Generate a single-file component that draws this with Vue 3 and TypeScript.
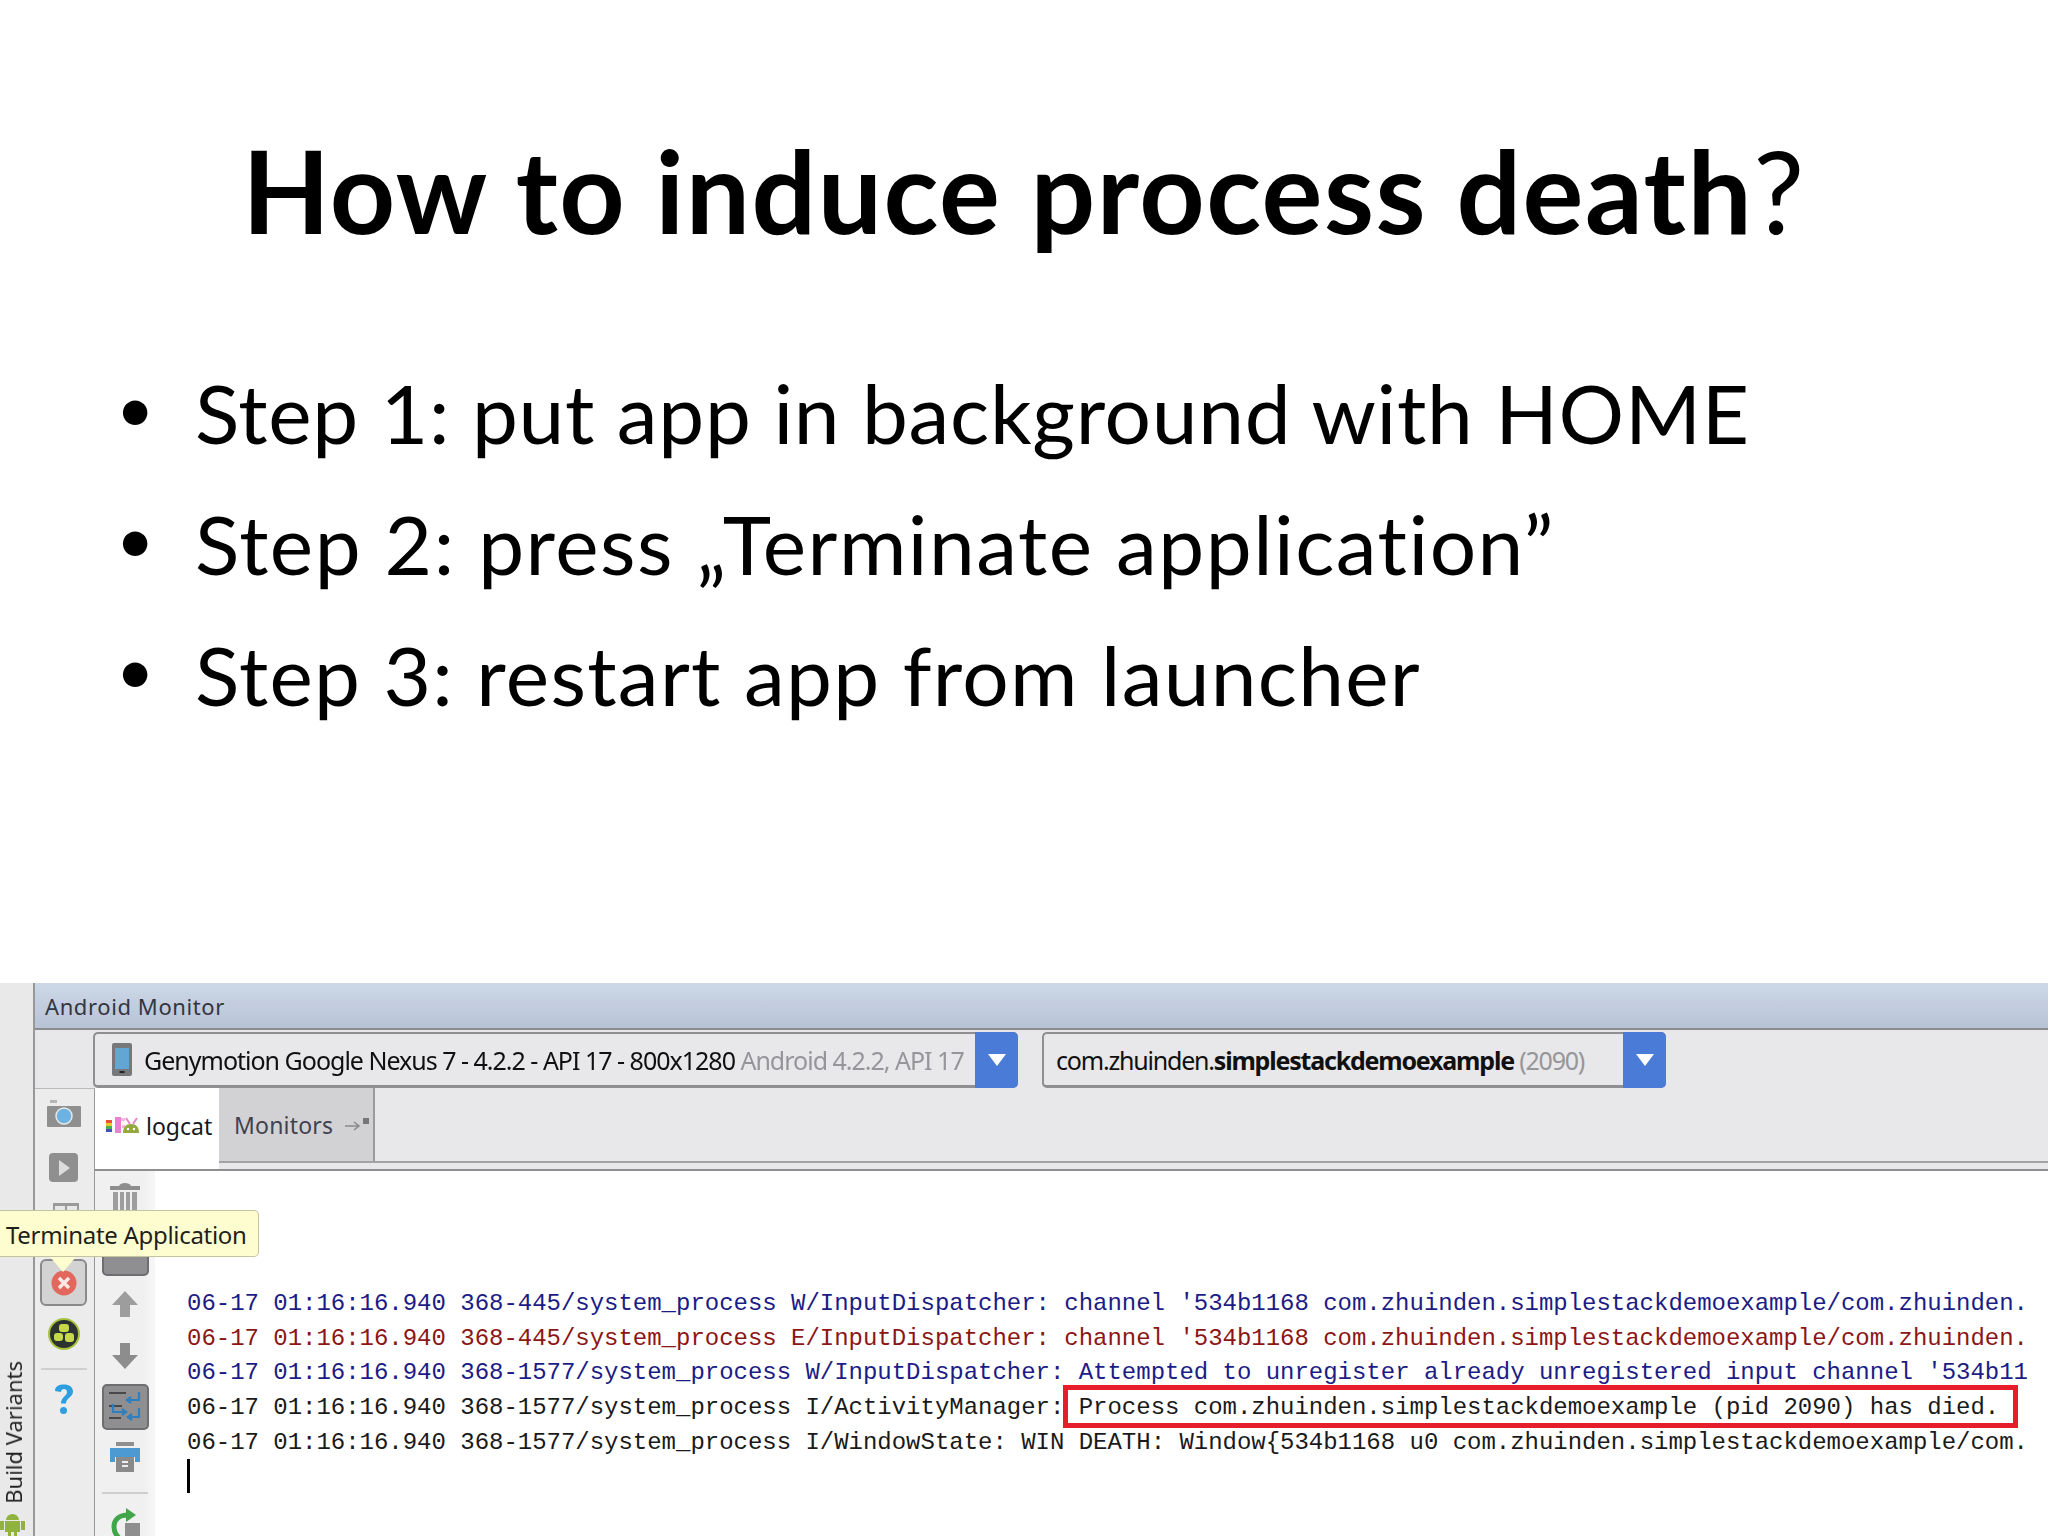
<script setup lang="ts">
interface LogLine { level: 'w' | 'e' | 'i'; prefix: string; text: string; marked?: boolean }
const stamp = '06-17 01:16:16.940 '
const lines: LogLine[] = [
  { level: 'w', prefix: '368-445/system_process W/InputDispatcher: ', text: "channel '534b1168 com.zhuinden.simplestackdemoexample/com.zhuinden." },
  { level: 'e', prefix: '368-445/system_process E/InputDispatcher: ', text: "channel '534b1168 com.zhuinden.simplestackdemoexample/com.zhuinden." },
  { level: 'w', prefix: '368-1577/system_process W/InputDispatcher: ', text: "Attempted to unregister already unregistered input channel '534b11" },
  { level: 'i', prefix: '368-1577/system_process I/ActivityManager: ', text: 'Process com.zhuinden.simplestackdemoexample (pid 2090) has died.', marked: true },
  { level: 'i', prefix: '368-1577/system_process I/WindowState: ', text: 'WIN DEATH: Window{534b1168 u0 com.zhuinden.simplestackdemoexample/com.' },
]
const steps: string[] = [
  'Step 1: put app in background with HOME',
  'Step 2: press „Terminate application”',
  'Step 3: restart app from launcher',
]
</script>

<template>
  <div class="page">
    <section class="slide">
      <h1 class="title">How to induce process death<span class="q">?</span></h1>
      <ul class="steps">
        <li v-for="s in steps" :key="s" class="step"><span class="dot">•</span><span>{{ s }}</span></li>
      </ul>
    </section>

    <section class="panel">
      <aside class="strip">
        <span class="vertical">Build Variants</span>
        <svg class="droid" width="25" height="24" viewBox="0 0 25 24"><path d="M6 8a6.500 6 0 0 1 13 0zM5 9h15v11h-3v4h-3v-4h-3v4H8v-4H5zM0 9h4v9H0zM21 9h4v9h-4z" fill="#8fb33c"/></svg>
      </aside>

      <div class="main">
        <header class="titlebar">Android Monitor</header>

        <div class="selectors">
          <div class="combo device">
            <svg class="phone" width="20" height="33" viewBox="0 0 20 33"><rect width="20" height="33" rx="2" fill="#77787a"/><rect x="3" y="5" width="14" height="21" fill="#62a6d6"/><rect x="7.500" y="28" width="5" height="2" fill="#222"/></svg>
            <span class="combo-text dev">Genymotion Google Nexus 7 - 4.2.2 - API 17 - 800x1280 <span class="muted">Android 4.2.2, API 17</span></span>
            <span class="arrow"><i></i></span>
          </div>
          <div class="combo app">
            <span class="combo-text pkg">com.zhuinden.<b>simplestackdemoexample</b> <span class="muted">(2090)</span></span>
            <span class="arrow"><i></i></span>
          </div>
        </div>

        <div class="body">
          <div class="col-a">
            <svg class="ic-camera" width="34" height="28" viewBox="0 0 34 28"><rect x="3" y="0" width="7" height="3" fill="#b5b5b5"/><rect y="6" width="34" height="21" rx="1" fill="#8f8f8f"/><circle cx="17" cy="16" r="8" fill="#6cb2e2" stroke="#e8e8e8" stroke-width="1.500"/></svg>
            <span class="ic-play"><svg width="12" height="16" viewBox="0 0 12 16"><path d="M1 0l11 8-11 8z" fill="#dcdcdc"/></svg></span>
            <svg class="ic-layout" width="26" height="30" viewBox="0 0 26 30"><path d="M0 0h26v30H0z" fill="#9a9a9a"/><path d="M2 3h10v6H2zM14 3h10v6H14z" fill="#e8e8e8"/></svg>
            <span class="ic-stop"><svg width="26" height="26" viewBox="0 0 26 26"><circle cx="13" cy="13" r="12.500" fill="#e2675c"/><path d="M8 8l10 10M18 8L8 18" stroke="#fbe9e6" stroke-width="3.500"/></svg></span>
            <svg class="ic-ball" width="32" height="32" viewBox="0 0 32 32"><circle cx="16" cy="16" r="15" fill="#2d3330" stroke="#a6c23a" stroke-width="2"/><rect x="11" y="6" width="10" height="8" rx="3" fill="#c6d94a"/><rect x="6" y="15" width="9" height="8" rx="3" fill="#c6d94a"/><rect x="17" y="15" width="9" height="9" rx="3" fill="#c6d94a"/></svg>
            <hr class="sep-a" />
            <svg class="ic-help" width="22" height="32" viewBox="0 0 22 32"><path d="M2 8C2 3 6 1.500 11 1.500S20 4 20 8.500c0 6-7 6-7 12H8c0-7 6-7 6-11.500 0-2-1.500-3-3-3S8 7 8 9z" fill="#2d9fe0"/><circle cx="10.500" cy="27.500" r="3.500" fill="#2d9fe0"/></svg>
          </div>

          <div class="content">
            <div class="tabs">
              <div class="tab logcat">
                <svg width="34" height="18" viewBox="0 0 34 18"><path d="M0 3h6v3H0z" fill="#e8503c"/><path d="M0 6h6v3H0z" fill="#f2c230"/><path d="M0 9h6v3H0z" fill="#4cae4f"/><path d="M0 12h6v3H0z" fill="#4450c0"/><rect x="9" y="0" width="6" height="16" fill="#ec7fd0"/><path d="M15 1h4v3h-4zM16 8h3v3h-3z" fill="#f4b6e4"/><path d="M17 16c0-6 3-9 8-9s8 3 8 9z" fill="#93a83e"/><circle cx="22" cy="12" r="1.200" fill="#fff"/><circle cx="28" cy="12" r="1.200" fill="#fff"/><path d="M20 1l4 6M31 1l-4 6" stroke="#e58ac9" stroke-width="2"/></svg>
                <span>logcat</span>
              </div>
              <div class="tab monitors">
                <span>Monitors</span>
                <svg width="24" height="14" viewBox="0 0 24 14"><path d="M0 8h13M9 4l5 4-5 4" stroke="#8a8a8a" stroke-width="1.500" fill="none"/><rect x="18" y="0" width="6" height="6" fill="#777"/></svg>
              </div>
            </div>
            <div class="rule"></div>

            <div class="lower">
              <div class="col-b">
                <svg class="ic-trash" width="30" height="30" viewBox="0 0 30 30"><path d="M9 5c1-4 11-4 12 0z" fill="#8e8e8e"/><rect y="5" width="30" height="4" fill="#8e8e8e"/><path d="M3 11h5v19H3zM10 11h4v19h-4zM16 11h4v19h-4zM22 11h5v19h-5z" fill="#9e9e9e"/></svg>
                <span class="pressed first"><i></i></span>
                <svg class="ic-up" width="26" height="26" viewBox="0 0 26 26"><path d="M13 0l13 14h-8v12H8V14H0z" fill="#9d9d9d"/></svg>
                <svg class="ic-down" width="26" height="26" viewBox="0 0 26 26"><path d="M8 0h10v12h8L13 26 0 12h8z" fill="#8d8d8d"/></svg>
                <span class="pressed wrap">
                  <svg width="32" height="32" viewBox="0 0 32 32"><path d="M0 2h17M0 15h13M0 27h12" stroke="#333" stroke-width="1.500"/><path d="M30 1v8H19M22 6l-4 3 4 3M4 13v8h12M13 18l4 3-4 3M30 17v9H20M23 23l-4 3 4 3" stroke="#2f7fbe" stroke-width="2.200" fill="none"/></svg>
                </span>
                <svg class="ic-print" width="30" height="30" viewBox="0 0 30 30"><rect x="6" y="0" width="18" height="4" fill="#8f8f8f"/><path d="M0 6h30v14h-5v-5H5v5H0z" fill="#4d9ad3"/><rect x="6" y="15" width="18" height="15" fill="#8a8a8a"/><path d="M12 20h6M12 24h6" stroke="#eee" stroke-width="2"/></svg>
                <hr class="sep-b" />
                <svg class="ic-refresh" width="30" height="32" viewBox="0 0 30 32"><path d="M18 7C10 7 4 11 4 19c0 5 2 8 5 11" stroke="#3fa64a" stroke-width="5" fill="none"/><path d="M16 0l10 7-10 7z" fill="#3fa64a"/><rect x="15" y="15" width="15" height="17" fill="#8e8e8e"/></svg>
              </div>

              <div class="log">
                <div v-for="(l, i) in lines" :key="i" class="line" :class="l.level">{{ stamp }}{{ l.prefix }}<span :class="{ marked: l.marked }">{{ l.text }}</span></div>
                <div class="caret"></div>
              </div>
            </div>
          </div>
        </div>

        <div class="tooltip">Terminate Application</div>
      </div>
    </section>
  </div>
</template>

<style>
html, body { margin: 0; background: #fff; overflow: hidden; }
</style>

<style scoped>
.page { width: 2048px; height: 1536px; display: flex; flex-direction: column; overflow: hidden; background: #fff; }
.slide { height: 983px; flex: none; box-sizing: border-box; padding-top: 125px; font-family: Lato, "Open Sans", sans-serif; color: #000; font-variant-ligatures: none; }
.title { margin: 0; text-align: center; font-size: 114px; line-height: 130px; font-weight: 700; letter-spacing: 1.500px; }
.q { font-weight: 400; }
.steps { list-style: none; margin: 107px 0 0; padding: 0 0 0 117px; }
.step { display: flex; height: 131px; font-size: 82px; line-height: 100px; letter-spacing: .72px; }
.step:nth-child(2) { letter-spacing: 1.500px; }
.step:nth-child(3) { letter-spacing: 1.280px; }
.dot { width: 79px; flex: none; font-size: 66px; line-height: 90px; margin-left: -1px; }

.panel { flex: 1; display: flex; position: relative; min-height: 0; filter: blur(0.5px); }
.strip { width: 33px; flex: none; background: #e9e9e9; border-right: 2px solid #989898; display: flex; flex-direction: column; align-items: flex-start; justify-content: flex-end; }
.vertical { writing-mode: vertical-rl; transform: rotate(180deg); font: 400 22px/22px "Noto Sans", sans-serif; color: #222; margin: 0 0 8px 2px; }
.droid { flex: none; }

.main { flex: 1; min-width: 0; display: flex; flex-direction: column; }
.titlebar { height: 47px; flex: none; box-sizing: border-box; padding: 8px 0 0 10px; background: linear-gradient(#ccd7e7, #b9c3d6); border-bottom: 2px solid #8c8c90; font: 400 22px/30px "Noto Sans", sans-serif; color: #33363f; letter-spacing: .6px; }

.selectors { height: 58px; flex: none; box-sizing: border-box; background: #e8e7e9; display: flex; padding: 2px 0 0 58px; gap: 24px; }
.combo { height: 56px; box-sizing: border-box; background: #e8e7e9; border: 2px solid #8f8f8f; border-bottom-width: 3px; border-radius: 5px; display: flex; align-items: center; position: relative; }
.device { width: 925px; padding-left: 17px; border-right: none; }
.app { width: 624px; padding-left: 12px; border-right: none; }
.phone { flex: none; margin-right: 12px; }
.combo-text { flex: 1; white-space: nowrap; font: 400 25px/34px "Noto Sans", sans-serif; color: #101010; }
.dev { letter-spacing: -1.000px; }
.pkg { letter-spacing: -1.200px; }
.muted { color: #96969a; }
.arrow { width: 43px; height: 56px; margin: -2px 0 -3px; flex: none; background: #4a7bd6; border-radius: 0 5px 5px 0; display: flex; align-items: center; justify-content: center; }
.arrow i { width: 0; height: 0; border: 9px solid transparent; border-top: 12px solid #fff; border-bottom: 0; }

.body { flex: 1; min-height: 0; display: flex; }
.col-a { width: 61px; flex: none; box-sizing: border-box; background: #ececec; border-right: 2px solid #989898; border-top: 1px solid #b9b9bb; padding-right: 2px; display: flex; flex-direction: column; align-items: center; overflow: hidden; }
.ic-camera { margin-top: 11px; flex: none; }
.ic-play { margin-top: 25px; width: 29px; height: 29px; background: #8f8f8f; border-radius: 4px; display: flex; align-items: center; justify-content: center; flex: none; }
.ic-layout { margin-top: 21px; flex: none; margin-left: 4px; }
.ic-stop { margin-top: 26px; width: 47px; height: 47px; box-sizing: border-box; background: #d3d3d3; border: 2px solid #8a8a8a; border-radius: 6px; display: flex; align-items: center; justify-content: center; flex: none; }
.ic-ball { margin-top: 12px; flex: none; }
.sep-a { width: 46px; margin: 18px 0 0; border: 0; border-top: 2px solid #cfcfcf; flex: none; }
.ic-help { margin-top: 13px; flex: none; }

.content { flex: 1; min-width: 0; display: flex; flex-direction: column; }
.tabs { height: 75px; flex: none; box-sizing: border-box; background: #e8e7e9; border-bottom: 2px solid #a3a3a5; display: flex; position: relative; margin-left: -1px; }
.tab { display: flex; align-items: center; box-sizing: border-box; font: 400 23px/30px "Noto Sans", sans-serif; }
.logcat { width: 124px; height: 81px; background: #fff; padding-left: 11px; gap: 6px; color: #15171f; padding-bottom: 6px; position: relative; z-index: 1; }
.monitors { width: 156px; height: 73px; background: #d2d1d3; border-right: 2px solid #9a9a9a; padding-left: 15px; gap: 12px; color: #3f4350; letter-spacing: .2px; }
.rule { flex: none; background: #e8e7e9; border-bottom: 2px solid #8f8f91; margin-left: -1px; height: 6px; }

.lower { flex: 1; min-height: 0; display: flex; background: #fff; }
.col-b { width: 60px; flex: none; background: linear-gradient(90deg, #f0f0f0 80%, #f7f7f7); display: flex; flex-direction: column; align-items: center; overflow: hidden; margin-left: -1px; }
.ic-trash { margin-top: 10px; flex: none; }
.pressed { width: 47px; height: 46px; box-sizing: border-box; background: #8f8f91; border: 2px solid #6e6e70; border-radius: 5px; display: flex; align-items: center; justify-content: center; flex: none; }
.pressed.first { margin-top: 19px; }
.pressed.first i { width: 30px; height: 18px; border: 2px solid #6d6d6d; border-top: 0; margin-top: -12px; }
.ic-up { margin-top: 15px; flex: none; }
.ic-down { margin-top: 26px; flex: none; }
.pressed.wrap { margin-top: 15px; }
.ic-print { margin-top: 12px; flex: none; }
.sep-b { width: 46px; margin: 20px 0 0; border: 0; border-top: 2px solid #cfcfcf; flex: none; }
.ic-refresh { margin-top: 14px; flex: none; }

.log { flex: 1; min-width: 0; box-sizing: border-box; padding: 116px 0 0 32px; font: 400 24px/34.700px "Liberation Mono", monospace; letter-spacing: -.02px; white-space: pre; overflow: hidden; }
.line { height: 34.700px; }
.w { color: #1c1c86; }
.e { color: #8c1616; }
.i { color: #1a1a1a; }
.marked { position: relative; }
.marked::after { content: ""; position: absolute; left: -16px; right: -19px; top: -9px; bottom: -7px; border: 5px solid #e61e2c; }
.caret { width: 3px; height: 34px; background: #000; margin-top: -1px; }

.tooltip { position: absolute; left: 0; top: 227px; width: 259px; height: 47px; box-sizing: border-box; padding-left: 6px; background: #fdfdcf; border: 1px solid #c4c4a0; border-left: 0; border-radius: 0 5px 5px 0; font: 400 24px/47px "Noto Sans", sans-serif; color: #1f1f1c; letter-spacing: -.3px; white-space: nowrap; z-index: 3; }
.tooltip::after { content: ""; position: absolute; left: 50px; top: 46px; border: 13px solid transparent; border-top: 15px solid #fdfdcf; border-bottom: 0; }
</style>
